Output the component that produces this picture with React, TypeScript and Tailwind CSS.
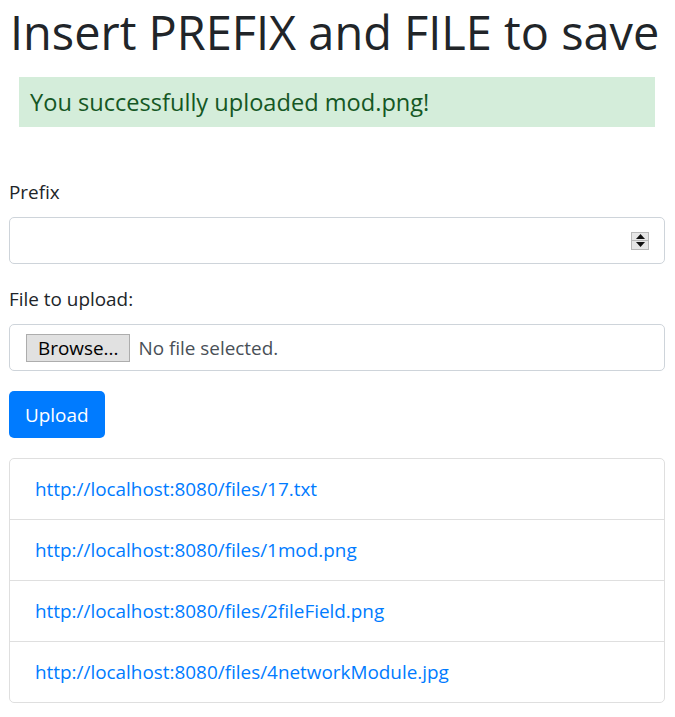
const files = [
    "http://localhost:8080/files/17.txt",
    "http://localhost:8080/files/1mod.png",
    "http://localhost:8080/files/2fileField.png",
    "http://localhost:8080/files/4networkModule.jpg",
]

function Spinner() {
    return (
        <div className="flex flex-col w-[18px] h-[18px] border border-[#b8b8b8] bg-[#e6e6e6]">
            <div className="flex-1 flex items-center justify-center border-b border-[#b8b8b8]">
                <svg width="9" height="5" viewBox="0 0 9 5"><polygon points="0,5 4.5,0 9,5" fill="#111" /></svg>
            </div>
            <div className="flex-1 flex items-center justify-center">
                <svg width="9" height="5" viewBox="0 0 9 5"><polygon points="0,0 9,0 4.5,5" fill="#111" /></svg>
            </div>
        </div>
    )
}

export default function App() {
    return (
        <div className="pl-[9px] pr-[10px] bg-white text-[#212529] font-['Open_Sans',sans-serif] text-[18.9px] leading-[30px]">
            <h1 className="text-[46.9px] leading-[60px] font-normal m-0 pt-[2px] pl-[1px]">Insert PREFIX and FILE to save</h1>

            <div className="mx-[10px] mt-[15px] h-[50px] flex items-center pl-[11px] bg-[#d4edda] text-[#155724] text-[23.6px]">
                You successfully uploaded mod.png!
            </div>

            <form className="mt-[50px]" onSubmit={(e) => e.preventDefault()}>
                <div className="mb-[20px]">
                    <label className="block mb-[10px]">Prefix</label>
                    <div className="h-[47px] border border-[#ced4da] rounded-[5px] flex items-center justify-end pr-[15px]">
                        <Spinner />
                    </div>
                </div>

                <div className="mb-[20px]">
                    <label className="block mb-[10px]">File to upload:</label>
                    <div className="h-[47px] border border-[#ced4da] rounded-[5px] flex items-center pl-[16px]">
                        <span className="h-[28px] px-[11px] flex items-center bg-[#e1e1e1] border border-[#adadad] text-black">
                            Browse...
                        </span>
                        <span className="ml-[8px] text-[#495057]">No file selected.</span>
                    </div>
                </div>

                <button className="h-[47px] px-[16px] rounded-[5px] bg-[#007bff] text-white">
                    Upload
                </button>
            </form>

            <div className="mt-[20px] border border-[#dfdfdf] rounded-[5px]">
                {files.map((url, i) => (
                    <div
                        key={url}
                        className={`px-[25px] py-[15px] ${i > 0 ? "border-t border-[#dfdfdf]" : ""}`}
                    >
                        <a href={url} className="text-[#007bff]">{url}</a>
                    </div>
                ))}
            </div>
        </div>
    )
}
